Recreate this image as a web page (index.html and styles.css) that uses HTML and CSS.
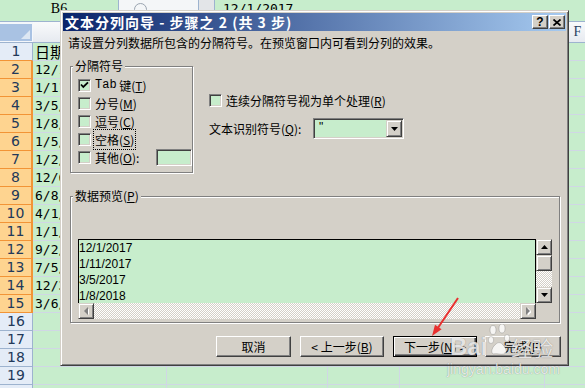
FILE: index.html
```html
<!DOCTYPE html>
<html lang="zh">
<head>
<meta charset="utf-8">
<title>文本分列向导</title>
<link rel="stylesheet" href="styles.css">
</head>
<body>
<div class="sheet">
  <div class="formula-bar">
    <div class="namebox">B6</div>
    <div class="fx-tools"><span class="fx-circle"></span></div>
    <div class="fx-btn"></div>
    <div class="formula">12/1/2017</div>
  </div>
  <div class="col-head">
    <div class="corner"></div>
    <div class="ch col-a">A</div><div class="ch col-b">B</div><div class="ch col-c">C</div><div class="ch col-d">D</div><div class="ch col-f">F</div>
  </div>
  <div class="grid">
    <div class="row pre"><div class="rh">1</div><div class="c col-a cjk">日期</div><div class="c col-b"></div><div class="c col-c"></div><div class="c col-d"></div><div class="c col-f"></div></div>
    <div class="row sel"><div class="rh">2</div><div class="c col-a">12/1/2017</div><div class="c col-b"></div><div class="c col-c"></div><div class="c col-d"></div><div class="c col-f"></div></div>
    <div class="row sel"><div class="rh">3</div><div class="c col-a">1/11/2017</div><div class="c col-b"></div><div class="c col-c"></div><div class="c col-d"></div><div class="c col-f"></div></div>
    <div class="row sel"><div class="rh">4</div><div class="c col-a">3/5/2017</div><div class="c col-b"></div><div class="c col-c"></div><div class="c col-d"></div><div class="c col-f"></div></div>
    <div class="row sel"><div class="rh">5</div><div class="c col-a">1/8/2018</div><div class="c col-b"></div><div class="c col-c"></div><div class="c col-d"></div><div class="c col-f"></div></div>
    <div class="row sel"><div class="rh">6</div><div class="c col-a">1/5/2018</div><div class="c col-b"></div><div class="c col-c"></div><div class="c col-d"></div><div class="c col-f"></div></div>
    <div class="row sel"><div class="rh">7</div><div class="c col-a">1/2/2018</div><div class="c col-b"></div><div class="c col-c"></div><div class="c col-d"></div><div class="c col-f"></div></div>
    <div class="row sel"><div class="rh">8</div><div class="c col-a">12/6/2017</div><div class="c col-b"></div><div class="c col-c"></div><div class="c col-d"></div><div class="c col-f"></div></div>
    <div class="row sel"><div class="rh">9</div><div class="c col-a">6/8/2017</div><div class="c col-b"></div><div class="c col-c"></div><div class="c col-d"></div><div class="c col-f"></div></div>
    <div class="row sel"><div class="rh">10</div><div class="c col-a">4/1/2018</div><div class="c col-b"></div><div class="c col-c"></div><div class="c col-d"></div><div class="c col-f"></div></div>
    <div class="row sel"><div class="rh">11</div><div class="c col-a">1/1/2018</div><div class="c col-b"></div><div class="c col-c"></div><div class="c col-d"></div><div class="c col-f"></div></div>
    <div class="row sel"><div class="rh">12</div><div class="c col-a">9/2/2017</div><div class="c col-b"></div><div class="c col-c"></div><div class="c col-d"></div><div class="c col-f"></div></div>
    <div class="row sel"><div class="rh">13</div><div class="c col-a">7/5/2017</div><div class="c col-b"></div><div class="c col-c"></div><div class="c col-d"></div><div class="c col-f"></div></div>
    <div class="row sel"><div class="rh">14</div><div class="c col-a">12/3/2017</div><div class="c col-b"></div><div class="c col-c"></div><div class="c col-d"></div><div class="c col-f"></div></div>
    <div class="row sel"><div class="rh">15</div><div class="c col-a">3/6/2018</div><div class="c col-b"></div><div class="c col-c"></div><div class="c col-d"></div><div class="c col-f"></div></div>
    <div class="row"><div class="rh">16</div><div class="c col-a"></div><div class="c col-b"></div><div class="c col-c"></div><div class="c col-d"></div><div class="c col-f"></div></div>
    <div class="row"><div class="rh">17</div><div class="c col-a"></div><div class="c col-b"></div><div class="c col-c"></div><div class="c col-d"></div><div class="c col-f"></div></div>
    <div class="row"><div class="rh">18</div><div class="c col-a"></div><div class="c col-b"></div><div class="c col-c"></div><div class="c col-d"></div><div class="c col-f"></div></div>
    <div class="row"><div class="rh">19</div><div class="c col-a"></div><div class="c col-b"></div><div class="c col-c"></div><div class="c col-d"></div><div class="c col-f"></div></div>
    <div class="row"><div class="rh"></div><div class="c col-a"></div><div class="c col-b"></div><div class="c col-c"></div><div class="c col-d"></div><div class="c col-f"></div></div>
  </div>
</div>

<div class="dialog">
  <div class="titlebar">
    <div class="title">文本分列向导 - 步骤之 2 (共 3 步)</div>
    <div class="tbtn help">?</div>
    <div class="tbtn close"><svg width="8" height="7" viewBox="0 0 8 7"><path d="M0.5 0.5L7.5 6.5M7.5 0.5L0.5 6.5" stroke="#000" stroke-width="1.7"/></svg></div>
  </div>
  <div class="intro">请设置分列数据所包含的分隔符号。在预览窗口内可看到分列的效果。</div>
  <div class="upper">
    <div class="group g1">
      <div class="gtitle">分隔符号</div>
      <div class="opts">
        <div class="opt"><span class="cb"><svg width="11" height="11" viewBox="0 0 11 11"><path d="M2 4.5L4.3 7L9 2.3" fill="none" stroke="#000" stroke-width="1.8"/></svg></span><span class="en">Tab</span>&nbsp;键(<u>T</u>)</div>
        <div class="opt"><span class="cb"></span>分号(<u>M</u>)</div>
        <div class="opt"><span class="cb"></span>逗号(<u>C</u>)</div>
        <div class="opt"><span class="cb"></span><span class="focus">空格(<u>S</u>)</span></div>
        <div class="opt"><span class="cb"></span>其他(<u>O</u>):<span class="tf"></span></div>
      </div>
    </div>
    <div class="right">
      <div class="ropt"><span class="cb"></span>连续分隔符号视为单个处理(<u>R</u>)</div>
      <div class="ropt2"><span class="lbl2">文本识别符号(<u>Q</u>):</span>
        <div class="combo"><span class="cval">"</span><span class="dd"><svg width="7" height="4" viewBox="0 0 7 4"><path d="M0 0H7L3.5 4Z" fill="#000"/></svg></span></div>
      </div>
    </div>
  </div>
  <div class="group g2">
    <div class="gtitle">数据预览(<u>P</u>)</div>
    <div class="preview">
      <div class="list">
        <div>12/1/2017</div>
        <div>1/11/2017</div>
        <div>3/5/2017</div>
        <div>1/8/2018</div>
      </div>
      <div class="vscroll">
        <span class="sbtn"><svg width="7" height="4" viewBox="0 0 7 4"><path d="M0 4H7L3.5 0Z" fill="#000"/></svg></span>
        <span class="sbtn thumb"></span>
        <span class="track"></span>
        <span class="sbtn"><svg width="7" height="4" viewBox="0 0 7 4"><path d="M0 0H7L3.5 4Z" fill="#000"/></svg></span>
      </div>
      <div class="hscroll">
        <span class="sbtn"><svg width="5" height="9" viewBox="0 0 5 9"><path d="M5 0V8L1 4Z" fill="#fff" transform="translate(0.8,0.8)"/><path d="M4 0V8L0 4Z" fill="#808080"/></svg></span>
        <span class="track"></span>
        <span class="sbtn"><svg width="5" height="9" viewBox="0 0 5 9"><path d="M1 0V8L5 4Z" fill="#fff" transform="translate(0.8,0.8)"/><path d="M0 0V8L4 4Z" fill="#808080"/></svg></span>
      </div>
      <div class="corner2"></div>
    </div>
  </div>
  <div class="buttons">
    <div class="btn w75">取消</div>
    <div class="btn w84">&lt; 上一步(<u>B</u>)</div>
    <div class="btn w84 default">下一步(<u>N</u>) &gt;</div>
    <div class="btn w76">完成(<u>F</u>)</div>
  </div>
</div>

<svg class="arrow" width="585" height="388" viewBox="0 0 585 388">
  <path d="M458 298L436.5 330" stroke="#e8302f" stroke-width="2" fill="none"/>
  <path d="M432 336L441.6 329.3L435 324.7Z" fill="#e8302f"/>
</svg>

<div class="watermark">
  <div class="wm-top"><span class="wm-bai">Bai</span><svg class="paw" width="22" height="34" viewBox="0 0 22 34"><ellipse cx="5" cy="6" rx="3" ry="4.5"/><ellipse cx="14" cy="4.5" rx="3" ry="4.5"/><ellipse cx="3" cy="16" rx="2.7" ry="3.5"/><ellipse cx="19" cy="14" rx="2.7" ry="3.5"/><path d="M5 30C2 28 5 22 8 20C10 18 13 18 15 21C18 24 20 29 16 30C13 31 9 29 5 30Z"/></svg><span class="wm-jy">经验</span></div>
  <div class="wm-url">jingyan.baidu.com</div>
</div>
</body>
</html>
```
FILE: styles.css
```css
* { box-sizing: border-box; }
html, body { margin: 0; padding: 0; }
body {
  width: 585px;
  height: 388px;
  overflow: hidden;
  position: relative;
  background: #c7edcc;
  font-family: "Noto Sans CJK SC", sans-serif;
  font-size: 12px;
  color: #000;
}

/* ---------- spreadsheet ---------- */
.formula-bar {
  display: flex;
  height: 22px;
  border-bottom: 1px solid #9db3cf;
  background: #c7edcc;
}
.namebox {
  width: 118px;
  text-align: center;
  font-family: "Liberation Serif", serif;
  font-size: 14px;
  line-height: 18px;
}
.fx-tools {
  width: 80px;
  background: #f4f6f8;
  border-left: 1px solid #9db3cf;
  padding: 3px 0 0 15px;
}
.fx-circle {
  display: block;
  width: 13px;
  height: 13px;
  border: 1px solid #9aa4b0;
  border-radius: 50%;
}
.fx-btn {
  width: 17px;
  background: #e3e5e8;
  border-left: 1px solid #9db3cf;
  border-right: 1px solid #9db3cf;
}
.formula {
  flex: 1;
  padding-left: 8px;
  font-family: "DejaVu Sans Mono", monospace;
  font-size: 13px;
  line-height: 18px;
}
.col-head {
  display: flex;
  height: 21px;
  border-bottom: 1px solid #9db3cf;
  background: linear-gradient(#f9fafb, #e6eaf0);
}
.corner {
  width: 33px;
  flex-shrink: 0;
  border: 2px solid #f4f7fb;
  border-width: 2px 1px 1px 0;
  background: #a9c2e3;
  position: relative;
}
.corner::after {
  content: "";
  position: absolute;
  right: 2px;
  bottom: 2px;
  border-style: solid;
  border-width: 0 0 9px 9px;
  border-color: transparent transparent #dde7f3 transparent;
}
.ch {
  border-right: 1px solid #9db3cf;
  text-align: center;
  font-family: "Liberation Serif", serif;
  font-size: 14px;
  line-height: 20px;
  color: #27415f;
  flex-shrink: 0;
}
.col-a { width: 134px; }
.col-b { width: 161px; }
.col-c { width: 72px; }
.col-d { width: 145px; }
.col-f { width: 66px; }

.row { display: flex; height: 18px; }
.rh {
  width: 33px;
  flex-shrink: 0;
  background: #e4ecf7;
  border-right: 1px solid #9db3cf;
  border-bottom: 1px solid #9db3cf;
  text-align: center;
  font-family: "DejaVu Sans", sans-serif;
  font-size: 14px;
  line-height: 17px;
  color: #22395a;
}
.row.pre .rh { border-bottom-color: #f29436; }
.row.sel .rh {
  background: #fed490;
  border-right: 2px solid #f29436;
  border-bottom: 1px solid #f29436;
}
.c {
  flex-shrink: 0;
  border-right: 1px solid #d0d7e5;
  border-bottom: 1px solid #d0d7e5;
  padding-left: 2px;
  font-family: "DejaVu Sans Mono", monospace;
  font-size: 13px;
  line-height: 17px;
  white-space: nowrap;
  overflow: hidden;
}
.c.cjk {
  font-family: "Noto Sans CJK SC", sans-serif;
  font-size: 15px;
}

/* ---------- dialog ---------- */
.dialog {
  position: absolute;
  left: 60px;
  top: 10px;
  width: 509px;
  height: 356px;
  background: #d4d0c8;
  border: 1px solid;
  border-color: #d4d0c8 #404040 #404040 #d4d0c8;
  box-shadow: inset 1px 1px #fff, inset -1px -1px #808080;
  padding: 2px;
}
.titlebar {
  height: 18px;
  display: flex;
  align-items: center;
  background: linear-gradient(to right, #0a246a, #a6caf0);
  color: #fff;
  padding: 0 1px 0 2px;
}
.title {
  flex: 1;
  font-weight: bold;
  font-size: 14px;
  line-height: 18px;
  letter-spacing: 1px;
  white-space: nowrap;
}
.tbtn {
  width: 16px;
  height: 14px;
  background: #d4d0c8;
  border: 1px solid;
  border-color: #fff #404040 #404040 #fff;
  box-shadow: inset -1px -1px #808080;
  color: #000;
  display: flex;
  align-items: center;
  justify-content: center;
  font-family: "Liberation Sans", sans-serif;
  font-weight: bold;
  font-size: 12px;
  line-height: 12px;
}
.tbtn.close { margin-left: 1px; }

.intro {
  margin: 5px 0 0 5px;
  line-height: 14px;
  white-space: nowrap;
}
.upper {
  display: flex;
  margin: 16px 0 0 7px;
}
.group {
  border: 1px solid #808080;
  box-shadow: inset 1px 1px #fff, 1px 1px #fff;
}
.gtitle {
  display: table;
  margin: -8px 0 0 -5px;
  padding: 0 2px;
  background: #d4d0c8;
  line-height: 14px;
  white-space: nowrap;
}
.g1 {
  width: 123px;
  height: 107px;
  padding-left: 7px;
  flex-shrink: 0;
}
.opts { margin-top: 3px; }
.opt {
  display: flex;
  align-items: center;
  height: 18px;
  white-space: nowrap;
}
.en {
  font-family: "Liberation Mono", monospace;
  font-size: 12px;
}
.cb {
  width: 13px;
  height: 13px;
  flex-shrink: 0;
  background: #c7edcc;
  border: 1px solid;
  border-color: #808080 #fff #fff #808080;
  box-shadow: inset 1px 1px #404040, inset -1px -1px #d4d0c8;
  margin-right: 4px;
  display: flex;
  align-items: center;
  justify-content: center;
}
.focus {
  outline: 1px dotted #000;
  outline-offset: 1px;
}
.tf {
  margin-left: auto;
  width: 36px;
  height: 17px;
  background: #c7edcc;
  border: 1px solid;
  border-color: #808080 #fff #fff #808080;
  box-shadow: inset 1px 1px #404040, inset -1px -1px #d4d0c8;
}
.right {
  margin-left: 16px;
  padding-top: 27px;
}
.ropt {
  display: flex;
  align-items: center;
  height: 14px;
  white-space: nowrap;
}
.ropt2 {
  display: flex;
  align-items: center;
  margin-top: 11px;
  height: 21px;
}
.lbl2 {
  width: 104px;
  white-space: nowrap;
}
.combo {
  width: 91px;
  height: 21px;
  display: flex;
  align-items: center;
  justify-content: space-between;
  background: #c7edcc;
  border: 1px solid;
  border-color: #808080 #fff #fff #808080;
  box-shadow: inset 1px 1px #404040, inset -1px -1px #d4d0c8;
  padding: 1px;
}
.cval {
  padding-left: 4px;
  align-self: flex-start;
  font-family: "Liberation Sans", sans-serif;
  font-size: 12px;
  line-height: 14px;
}
.dd {
  width: 16px;
  height: 17px;
  background: #d4d0c8;
  border: 1px solid;
  border-color: #d4d0c8 #404040 #404040 #d4d0c8;
  box-shadow: inset 1px 1px #fff, inset -1px -1px #808080;
  display: flex;
  align-items: center;
  justify-content: center;
}

.g2 {
  margin: 23px 0 0 7px;
  width: 490px;
  height: 127px;
  padding-left: 7px;
}
.preview {
  margin-top: 36px;
  width: 474px;
  display: grid;
  grid-template-columns: 458px 16px;
  grid-template-rows: 64px 16px;
}
.list {
  background: #c7edcc;
  border: 1px solid #000;
  border-bottom: none;
  font-family: "Liberation Sans", sans-serif;
  font-size: 12px;
  line-height: 16px;
  overflow: hidden;
}
.vscroll {
  display: flex;
  flex-direction: column;
}
.hscroll {
  display: flex;
}
.sbtn {
  width: 16px;
  height: 16px;
  flex-shrink: 0;
  background: #d4d0c8;
  border: 1px solid;
  border-color: #d4d0c8 #404040 #404040 #d4d0c8;
  box-shadow: inset 1px 1px #fff, inset -1px -1px #808080;
  display: flex;
  align-items: center;
  justify-content: center;
}
.track {
  flex: 1;
  background: repeating-conic-gradient(#ffffff 0 25%, #d4d0c8 0 50%) 0 0 / 2px 2px;
}
.corner2 { background: #d4d0c8; }

.buttons {
  display: flex;
  justify-content: flex-end;
  margin-top: 13px;
  padding-right: 5px;
}
.btn {
  height: 21px;
  display: flex;
  align-items: center;
  justify-content: center;
  background: #d4d0c8;
  border: 1px solid;
  border-color: #fff #404040 #404040 #fff;
  box-shadow: inset -1px -1px #808080;
  white-space: nowrap;
  margin-left: 9px;
}
.btn.w75 { width: 75px; margin-left: 0; }
.btn.w84 { width: 84px; }
.btn.w76 { width: 76px; margin-left: 8px; }
.btn.default {
  border-color: #000;
  box-shadow: inset 1px 1px #fff, inset -1px -1px #404040, inset -2px -2px #808080;
}

/* ---------- overlays ---------- */
.arrow {
  position: absolute;
  left: 0;
  top: 0;
  pointer-events: none;
}
.watermark {
  position: absolute;
  left: 447px;
  top: 323px;
  color: rgba(255, 255, 255, 0.78);
  text-shadow: 0 0 1px rgba(60, 60, 60, 0.55);
  pointer-events: none;
}
.wm-top {
  display: flex;
  align-items: flex-end;
  height: 38px;
}
.wm-bai {
  font-family: "Liberation Sans", sans-serif;
  font-weight: bold;
  font-size: 24px;
  line-height: 28px;
  margin-left: 3px;
}
.paw {
  fill: rgba(255, 255, 255, 0.78);
  stroke: rgba(90, 90, 90, 0.45);
  stroke-width: 0.6;
  margin: 0 0 3px 1px;
}
.wm-jy {
  font-family: "Noto Sans CJK SC", sans-serif;
  font-size: 21px;
  line-height: 28px;
  margin-left: 1px;
}
.wm-url {
  font-family: "Liberation Sans", sans-serif;
  font-size: 14px;
  line-height: 16px;
}
```
